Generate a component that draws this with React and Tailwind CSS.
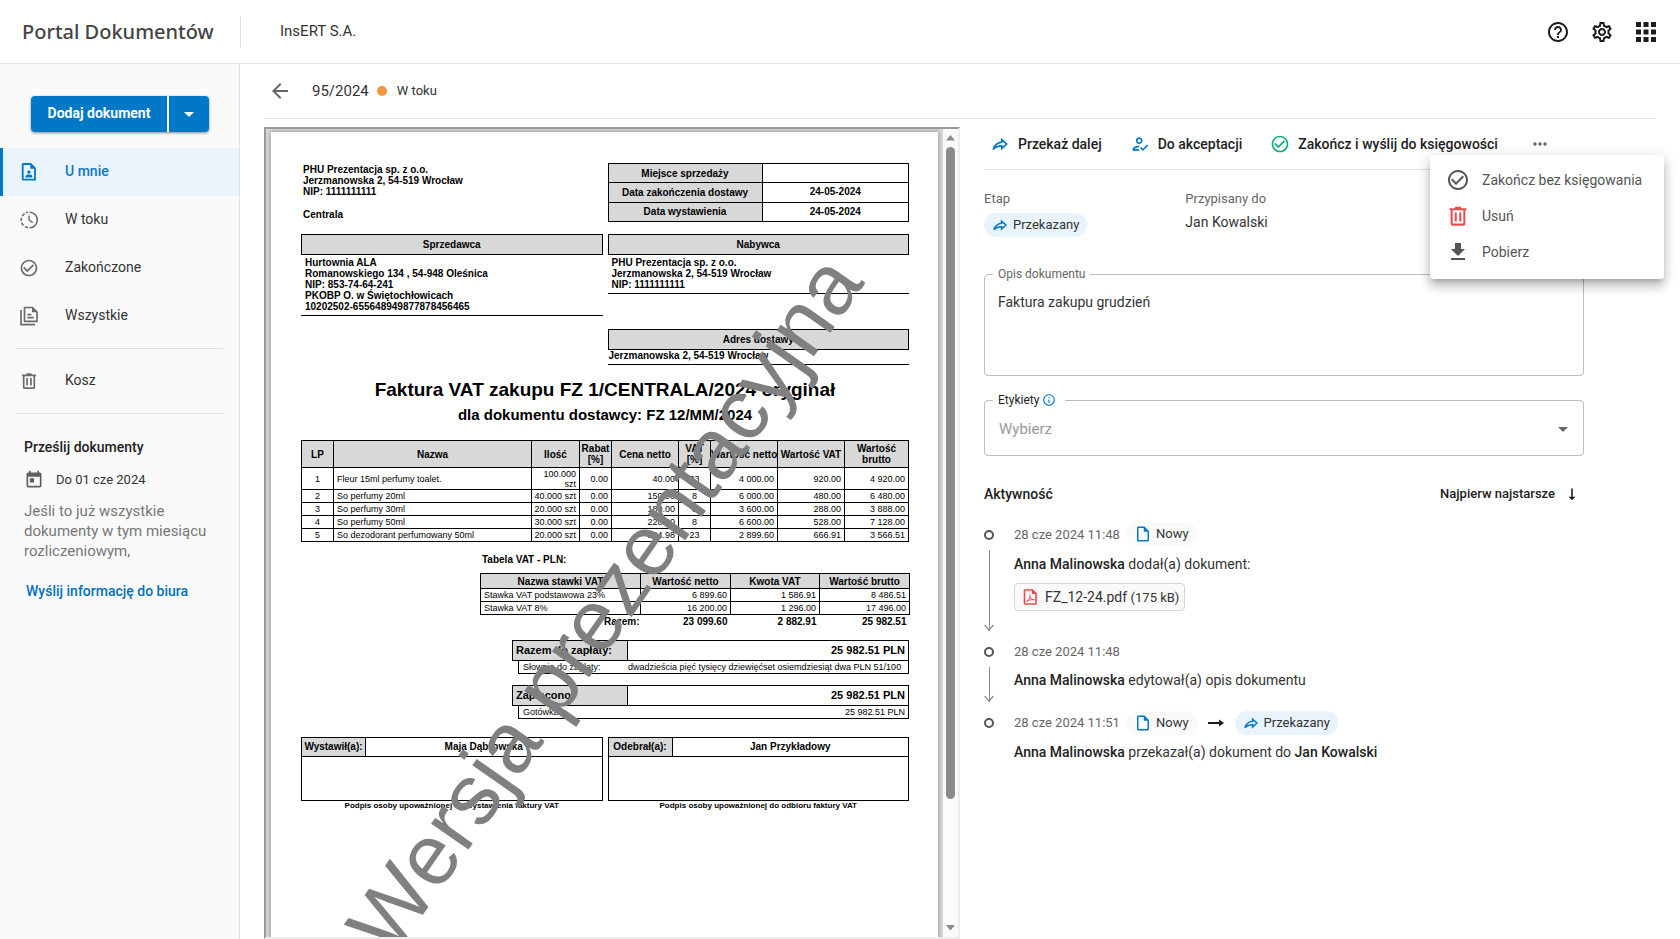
import React from "react";
import {
  MdHelpOutline,
  MdOutlineSettings,
  MdArrowBack,
  MdArrowDropDown,
  MdCheckCircleOutline,
  MdToday,
  MdOutlineHowToReg,
  MdOutlineInfo,
  MdOutlineInsertDriveFile,
  MdMoreHoriz,
  MdDownload,
} from "react-icons/md";

function ShareArrow({ className }) {
  return (
    <svg viewBox="0 0 20 20" className={className} fill="none" stroke="currentColor" strokeWidth="1.9" aria-hidden="true">
      <path d="M12 5.200v2.700C7 8.500 3.800 11.200 2.400 16c2.300-2.600 5.300-3.900 9.600-3.900v3L17.400 10z" />
    </svg>
  );
}

function TrashIcon({ className }) {
  return (
    <svg viewBox="0 0 20 20" className={className} fill="none" stroke="currentColor" strokeWidth="1.700" aria-hidden="true">
      <path d="M3 4.300h14M7.500 3.200h5" />
      <path d="M4.700 4.500v11.700q0 1 1 1h8.600q1 0 1-1V4.500" />
      <path d="M8.100 7v7.600M11.900 7v7.600" />
    </svg>
  );
}

function UserFileIcon({ className }) {
  return (
    <svg viewBox="0 0 20 20" className={className} aria-hidden="true">
      <path d="M4.300 2h7.400L16 6.300v11.400H4.300q-.6 0-.6-.6V2.600q0-.6.600-.6z" fill="none" stroke="currentColor" strokeWidth="1.800" strokeLinejoin="round" />
      <path d="M11.300 1.500v5.300h5.200z" fill="currentColor" />
      <circle cx="9.900" cy="10.100" r="1.700" fill="currentColor" />
      <path d="M6.500 15.500v-1c0-1.300 1.800-1.900 3.400-1.900s3.400.6 3.400 1.900v1z" fill="currentColor" />
    </svg>
  );
}

function ProgressClock({ className }) {
  return (
    <svg viewBox="0 0 20 20" className={className} fill="none" stroke="currentColor" strokeWidth="1.600" aria-hidden="true">
      <path d="M10.500 2.200a7.800 7.800 0 0 1 0 15.600" />
      <path d="M9 17.700a7.800 7.800 0 0 1-6.800-7.700 7.800 7.800 0 0 1 6.800-7.700" strokeDasharray="3.200 1.800" />
      <path d="M10 5.500V10l3.700 2.600" strokeWidth="1.400" />
    </svg>
  );
}

function FilesIcon({ className }) {
  return (
    <svg viewBox="0 0 20 20" className={className} fill="none" stroke="currentColor" strokeWidth="1.700" aria-hidden="true">
      <path d="M5.500 1.500h8L18 6v9.300H5.500z" strokeLinejoin="round" />
      <path d="M13 1.500v4.800h4.800z" fill="currentColor" stroke="none" />
      <path d="M2 4v14.700h14M8.300 8.700h4M8.300 11.700h6.500" />
    </svg>
  );
}

function PdfIcon({ className }) {
  return (
    <svg viewBox="0 0 20 20" className={className} fill="none" stroke="currentColor" strokeWidth="1.600" aria-hidden="true">
      <path d="M4.500 3h8L16 6.500V17H4.500z" strokeLinejoin="round" />
      <path d="M12 2.500v4.500h4.500z" fill="currentColor" stroke="none" />
      <path d="M6.500 14.500c2.500-1.500 4-4 3.500-7M10 9.500c.6 2 2 3.400 4.500 3.300-2.500-.5-5.200 0-8 1.700" strokeWidth="1" />
    </svg>
  );
}

function DownArrowLine() {
  return (
    <div className="relative mx-auto mb-[9px] w-px flex-1 bg-[#8a8a8a]">
      <svg viewBox="0 0 10 7" className="absolute bottom-0 left-1/2 h-[7px] w-[10px] -translate-x-1/2" fill="none" stroke="#8a8a8a" strokeWidth="1.200" aria-hidden="true">
        <path d="M.6 1 5 6.200 9.400 1" />
      </svg>
    </div>
  );
}

function NavItem({ icon, label, active }) {
  return (
    <a
      href="#"
      aria-current={active ? "page" : undefined}
      className={
        active
          ? "flex h-12 items-center gap-[26px] border-l-[3px] border-[#0078c8] bg-[#e9f3fb] pl-4 text-[14px] font-medium text-[#0d78c4]"
          : "flex h-12 items-center gap-[26px] pl-[19px] text-[14px] text-[#333]"
      }
    >
      <span className={active ? "text-[#0078c8]" : "text-[#6b6b6b]"}>{icon}</span>
      <span className="pb-px">{label}</span>
    </a>
  );
}

function StatusChip({ kind, children }) {
  return (
    <span
      className={
        kind === "sent"
          ? "inline-flex h-6 items-center gap-[5px] rounded-full bg-[#e9f3fb] px-2 text-[13px] text-[#333]"
          : "inline-flex h-6 items-center gap-1 rounded-full bg-[#fafafa] px-2 text-[13px] text-[#333]"
      }
    >
      {kind === "sent" ? (
        <ShareArrow className="size-4 text-[#0078c8]" />
      ) : (
        <MdOutlineInsertDriveFile className="size-[18px] text-[#0078c8]" />
      )}
      {children}
    </span>
  );
}

const items = [
  ["1", "Fleur 15ml perfumy toalet.", "100.000 szt", "0.00", "40.00", "23", "4 000.00", "920.00", "4 920.00"],
  ["2", "So perfumy 20ml", "40.000 szt", "0.00", "150.00", "8", "6 000.00", "480.00", "6 480.00"],
  ["3", "So perfumy 30ml", "20.000 szt", "0.00", "180.00", "8", "3 600.00", "288.00", "3 888.00"],
  ["4", "So perfumy 50ml", "30.000 szt", "0.00", "220.00", "8", "6 600.00", "528.00", "7 128.00"],
  ["5", "So dezodorant perfumowany 50ml", "20.000 szt", "0.00", "144.98", "23", "2 899.60", "666.91", "3 566.51"],
];

const vatRows = [
  ["Stawka VAT podstawowa 23%", "6 899.60", "1 586.91", "8 486.51"],
  ["Stawka VAT 8%", "16 200.00", "1 296.00", "17 496.00"],
];

const cell = "border border-black p-0 leading-[10px]";
const headCell = "border border-black bg-[#d8d8d8] p-0 leading-[11px] font-bold";

function PartyBox({ title, lines, flush }) {
  return (
    <div>
      <div className="flex h-[21px] items-center justify-center border border-black bg-[#d8d8d8]">{title}</div>
      <div className={flush ? "border-b border-black pb-[3px] pl-px" : "border-b border-black px-1 pt-0.5 pb-[3px]"}>
        {lines.map((line) => (
          <p key={line}>{line}</p>
        ))}
      </div>
    </div>
  );
}

function Payment({ title, amount, note, noteValue, wide }) {
  return (
    <div className="ml-[211px]">
      <div className="flex h-[21px] items-stretch border border-black text-[11px] leading-[19px]">
        <div className="w-[115px] border-r border-black bg-[#d8d8d8] pl-[3px]">{title}</div>
        <div className="flex-1 pr-[3px] text-right">{amount}</div>
      </div>
      <div className="ml-[6px] flex h-[13px] border-x border-b border-black text-[9px] leading-[12px] font-normal">
        <div className="w-[108px] pl-[4px]">{note}</div>
        <div className={wide ? "flex-1 pl-px" : "flex-1 pr-[3px] text-right"}>{noteValue}</div>
      </div>
    </div>
  );
}

function Signature({ title, person, caption }) {
  return (
    <div>
      <div className="border border-black">
        <div className="flex h-[19px] items-stretch border-b border-black leading-[18px]">
          <div className="w-16 border-r border-black bg-[#d8d8d8] text-center">{title}</div>
          <div className="flex-1 text-center">{person}</div>
        </div>
        <div className="h-[43px]" />
      </div>
      <p className="text-center text-[8px] leading-[10px]">{caption}</p>
    </div>
  );
}

function Invoice() {
  return (
    <article className="relative h-[943px] overflow-hidden bg-white pt-[31px] pr-[29px] pl-[30px] font-['Liberation_Sans',Arial,sans-serif] text-[10px] leading-[11px] font-bold text-black shadow-[0_0_6px_2px_rgba(0,0,0,0.28)]">
      <div className="grid grid-cols-2 gap-[5px]">
        <div className="pt-px pl-0.5">
          <p>PHU Prezentacja sp. z o.o.</p>
          <p>Jerzmanowska 2, 54-519 Wrocław</p>
          <p>NIP: 1111111111</p>
          <p className="pt-3">Centrala</p>
        </div>
        <table className="h-[59px] w-full table-fixed border-collapse text-center">
          <tbody>
            <tr>
              <th className={headCell + " w-[154px]"}>Miejsce sprzedaży</th>
              <td className={cell}></td>
            </tr>
            <tr>
              <th className={headCell}>Data zakończenia dostawy</th>
              <td className={cell}>24-05-2024</td>
            </tr>
            <tr>
              <th className={headCell}>Data wystawienia</th>
              <td className={cell}>24-05-2024</td>
            </tr>
          </tbody>
        </table>
      </div>

      <div className="mt-3 grid grid-cols-2 items-start gap-[5px]">
        <PartyBox
          title="Sprzedawca"
          lines={["Hurtownia ALA", "Romanowskiego 134 , 54-948 Oleśnica", "NIP: 853-74-64-241", "PKOBP O. w Świętochłowicach", "10202502-655648949877878456465"]}
        />
        <div className="flex flex-col gap-[35px]">
          <PartyBox title="Nabywca" lines={["PHU Prezentacja sp. z o.o.", "Jerzmanowska 2, 54-519 Wrocław", "NIP: 1111111111"]} />
          <PartyBox title="Adres dostawy" lines={["Jerzmanowska 2, 54-519 Wrocław"]} flush />
        </div>
      </div>

      <h1 className="mt-[13px] text-center text-[19px] leading-6">Faktura VAT zakupu FZ 1/CENTRALA/2024 oryginał</h1>
      <h2 className="mt-[3px] text-center text-[15px] leading-5">dla dokumentu dostawcy: FZ 12/MM/2024</h2>

      <table className="mt-[15px] w-full table-fixed border-collapse text-[9px] font-normal">
        <thead className="text-[10px]">
          <tr className="h-[27px]">
            <th className={headCell + " w-[32px]"}>LP</th>
            <th className={headCell + " w-[198px]"}>Nazwa</th>
            <th className={headCell + " w-[48px]"}>Ilość</th>
            <th className={headCell + " w-[32px]"}>Rabat [%]</th>
            <th className={headCell + " w-[67px]"}>Cena netto</th>
            <th className={headCell + " w-[32px]"}>VAT [%]</th>
            <th className={headCell + " w-[67px] whitespace-nowrap"}>Wartość netto</th>
            <th className={headCell + " w-[67px] whitespace-nowrap"}>Wartość VAT</th>
            <th className={headCell + " w-[64px]"}>Wartość brutto</th>
          </tr>
        </thead>
        <tbody>
          {items.map((row, r) => (
            <tr key={row[0]} className={r === 0 ? "h-[22px]" : "h-[13px]"}>
              {row.map((value, c) => (
                <td
                  key={c}
                  className={
                    cell + (c === 0 || c === 5 ? " text-center" : c === 1 ? " pl-[3px] text-left" : " pr-[3px] text-right")
                  }
                >
                  {value}
                </td>
              ))}
            </tr>
          ))}
        </tbody>
      </table>

      <p className="mt-3 pl-[181px]">Tabela VAT - PLN:</p>
      <div className="mt-2 pl-[179px]">
        <table className="w-full table-fixed border-collapse text-[9px] font-normal">
          <thead className="text-[10px]">
            <tr className="h-[15px]">
              <th className={headCell + " w-[160px]"}>Nazwa stawki VAT</th>
              <th className={headCell + " w-[90px]"}>Wartość netto</th>
              <th className={headCell + " w-[89px]"}>Kwota VAT</th>
              <th className={headCell + " w-[90px]"}>Wartość brutto</th>
            </tr>
          </thead>
          <tbody>
            {vatRows.map((row) => (
              <tr key={row[0]} className="h-[13px]">
                {row.map((value, c) => (
                  <td key={c} className={cell + (c === 0 ? " pl-[3px] text-left" : " pr-[3px] text-right")}>
                    {value}
                  </td>
                ))}
              </tr>
            ))}
          </tbody>
          <tfoot className="text-right text-[10px] leading-[11px] font-bold">
            <tr className="h-[13px]">
              <td className="p-0 pr-px">Razem:</td>
              <td className="p-0 pr-[3px]">23 099.60</td>
              <td className="p-0 pr-[3px]">2 882.91</td>
              <td className="p-0 pr-[3px]">25 982.51</td>
            </tr>
          </tfoot>
        </table>
      </div>

      <div className="mt-3 flex flex-col gap-[11px]">
        <Payment
          title="Razem do zapłaty:"
          amount="25 982.51 PLN"
          note="Słownie do zapłaty:"
          noteValue="dwadzieścia pięć tysięcy dziewięćset osiemdziesiąt dwa PLN 51/100"
          wide
        />
        <Payment title="Zapłacono:" amount="25 982.51 PLN" note="Gotówka" noteValue="25 982.51 PLN" />
      </div>

      <div className="mt-[18px] grid grid-cols-2 gap-[5px]">
        <Signature title="Wystawił(a):" person="Maja Dąbrowska" caption="Podpis osoby upoważnionej do wystawienia faktury VAT" />
        <Signature title="Odebrał(a):" person="Jan Przykładowy" caption="Podpis osoby upoważnionej do odbioru faktury VAT" />
      </div>

      <div className="absolute top-[754px] left-[121px] origin-[0_73px] rotate-[-55deg] text-[86px] leading-none font-normal whitespace-nowrap text-[#808080]">
        Wersja prezentacyjna
      </div>
    </article>
  );
}

function DocumentPreview() {
  return (
    <section aria-label="Podgląd dokumentu" className="flex min-h-0 min-w-0 flex-1 border-2 border-t-[#999] border-r-[#ededed] border-b-[#ededed] border-l-[#999]">
      <div className="min-w-0 flex-1 overflow-hidden bg-[#e4e4e4] px-[5px] pt-[3px]">
        <Invoice />
      </div>
      <div className="flex w-[15px] shrink-0 flex-col items-center bg-[#fbfbfb]">
        <svg viewBox="0 0 9 18" className="h-[18px] w-[9px]" aria-hidden="true">
          <path d="M0 11.500h9L4.500 6z" fill="#8b8b8b" />
        </svg>
        <div className="w-[9px] flex-[651] rounded-full bg-[#8b8b8b]" />
        <div className="flex-[120]" />
        <svg viewBox="0 0 9 18" className="h-[18px] w-[9px]" aria-hidden="true">
          <path d="M0 6h9l-4.500 5.500z" fill="#8b8b8b" />
        </svg>
      </div>
    </section>
  );
}

function TimelineEntry({ date, chips, children, last }) {
  return (
    <li className="flex gap-5">
      <div className="flex w-[10px] flex-col">
        <span className="mt-[7px] mb-[10px] size-[10px] shrink-0 rounded-full border-2 border-[#555]" />
        {!last && <DownArrowLine />}
      </div>
      <div className="flex-1">
        <div className="flex h-6 items-center text-[13px] text-[#666]">
          <time>{date}</time>
          {chips}
        </div>
        {children}
      </div>
    </li>
  );
}

function ActionMenu() {
  const rows = [
    [<MdCheckCircleOutline className="size-6 text-[#555]" />, "Zakończ bez księgowania"],
    [<TrashIcon className="size-6 text-[#e84c4c]" />, "Usuń"],
    [<MdDownload className="size-6 text-[#555]" />, "Pobierz"],
  ];
  return (
    <div role="menu" className="absolute top-7 -right-2 z-10 w-[234px] rounded bg-white pt-[7px] pb-[9px] shadow-[0_5px_5px_-3px_rgba(0,0,0,0.2),0_8px_10px_1px_rgba(0,0,0,0.14),0_3px_14px_2px_rgba(0,0,0,0.12)]">
      {rows.map(([icon, label]) => (
        <button key={label} role="menuitem" type="button" className="flex h-9 w-full items-center gap-3 pl-4 text-[14px] text-[#555]">
          {icon}
          {label}
        </button>
      ))}
    </div>
  );
}

export default function App() {
  return (
    <div className="flex h-screen flex-col overflow-hidden bg-white font-[Roboto,sans-serif] text-[#333]">
      <header className="flex h-16 shrink-0 items-center border-b border-[#e0e0e0] pr-[22px]">
        <div className="flex h-8 w-[241px] items-center border-r border-[#e0e0e0] pl-[22px] font-['Noto_Sans',sans-serif] text-[20px] font-medium text-[#444]">
          Portal Dokumentów
        </div>
        <div className="flex-1 pl-[39px] text-[15px]">InsERT S.A.</div>
        <div className="flex items-center gap-5 text-[#1d1d1d]">
          <button type="button" aria-label="Pomoc">
            <MdHelpOutline className="size-6" />
          </button>
          <button type="button" aria-label="Ustawienia">
            <MdOutlineSettings className="size-6" />
          </button>
          <button type="button" aria-label="Aplikacje">
            <svg viewBox="0 0 24 24" className="size-6" fill="currentColor" aria-hidden="true">
              <path d="M2 2h5v5H2zM9.500 2h5v5h-5zM17 2h5v5h-5zM2 9.500h5v5H2zM9.500 9.500h5v5h-5zM17 9.500h5v5h-5zM2 17h5v5H2zM9.500 17h5v5h-5zM17 17h5v5h-5z" />
            </svg>
          </button>
        </div>
      </header>

      <div className="flex min-h-0 flex-1">
        <aside className="flex w-60 shrink-0 flex-col border-r border-[#e0e0e0] bg-[#fafafa]">
          <div className="mt-8 mb-4 ml-[31px] flex h-9 w-[178px] gap-0.5 self-start rounded shadow-[0_1px_3px_rgba(0,0,0,0.45)]">
            <button type="button" className="flex-1 rounded-l bg-[#0078c8] pb-0.5 text-[14px] font-bold text-white">
              Dodaj dokument
            </button>
            <button type="button" aria-label="Więcej opcji" className="flex w-10 items-center justify-center rounded-r bg-[#0078c8] text-white">
              <MdArrowDropDown className="size-6" />
            </button>
          </div>
          <nav>
            <NavItem active icon={<UserFileIcon className="size-5" />} label="U mnie" />
            <NavItem icon={<ProgressClock className="size-5" />} label="W toku" />
            <NavItem icon={<MdCheckCircleOutline className="size-5" />} label="Zakończone" />
            <NavItem icon={<FilesIcon className="size-5" />} label="Wszystkie" />
            <hr className="mx-4 mt-2 mb-2 border-[#e0e0e0]" />
            <NavItem icon={<TrashIcon className="size-5" />} label="Kosz" />
            <hr className="mx-4 mt-2 border-[#e0e0e0]" />
          </nav>
          <div className="px-6 pt-[23px]">
            <h2 className="text-[14px] leading-5 font-medium text-[#222]">Prześlij dokumenty</h2>
            <div className="mt-[13px] flex items-center gap-3 text-[13px] leading-5">
              <MdToday className="size-5 text-[#5f5f5f]" />
              Do 01 cze 2024
            </div>
            <p className="mt-[11px] text-[15px] leading-5 text-[#777]">Jeśli to już wszystkie dokumenty w tym miesiącu rozliczeniowym,</p>
            <a href="#" className="mt-5 block pl-0.5 text-[14px] leading-5 font-medium text-[#0070bd]">
              Wyślij informację do biura
            </a>
          </div>
        </aside>

        <main className="flex min-w-0 flex-1 flex-col px-6">
          <div className="flex h-[55px] shrink-0 items-center border-b border-[#e0e0e0]">
            <button type="button" aria-label="Wstecz" className="ml-1 text-[#666]">
              <MdArrowBack className="size-6" />
            </button>
            <span className="ml-5 text-[15px]">95/2024</span>
            <span className="mr-[10px] ml-2 size-[10px] rounded-full bg-[#f29646]" />
            <span className="text-[13px]">W toku</span>
          </div>

          <div className="flex min-h-0 flex-1 gap-6 pt-2">
            <DocumentPreview />

            <section aria-label="Szczegóły dokumentu" className="relative w-[672px] shrink-0">
              <ActionMenu />
              <div className="flex h-[43px] items-center border-b border-[#e0e0e0] pb-2 pl-[7px] text-[14px] font-medium text-[#222]">
                <button type="button" className="flex items-center gap-[9px]">
                  <ShareArrow className="size-[18px] text-[#0078c8]" />
                  Przekaż dalej
                </button>
                <button type="button" className="ml-7 flex items-center gap-2">
                  <MdOutlineHowToReg className="size-5 text-[#0078c8]" />
                  Do akceptacji
                </button>
                <button type="button" className="ml-7 flex items-center gap-2">
                  <MdCheckCircleOutline className="size-5 text-[#0fae74]" />
                  Zakończ i wyślij do księgowości
                </button>
                <button type="button" aria-label="Więcej" className="ml-8 text-[#666]">
                  <MdMoreHoriz className="size-5" />
                </button>
              </div>

              <div className="max-w-[600px]">
                <dl className="flex gap-[98px] pt-[19px]">
                  <div>
                    <dt className="text-[13px] leading-5 text-[#666]">Etap</dt>
                    <dd className="mt-1 flex">
                      <StatusChip kind="sent">Przekazany</StatusChip>
                    </dd>
                  </div>
                  <div>
                    <dt className="text-[13px] leading-5 text-[#666]">Przypisany do</dt>
                    <dd className="mt-[3px] text-[14px] leading-5">Jan Kowalski</dd>
                  </div>
                </dl>

                <fieldset className="mt-[29px] h-[110px] rounded border border-[#bdbdbd] px-2">
                  <legend className="px-[5px] text-[12px] leading-4 text-[#666]">
                    <label htmlFor="opis">Opis dokumentu</label>
                  </legend>
                  <textarea id="opis" defaultValue="Faktura zakupu grudzień" className="block h-[76px] w-full resize-none px-[5px] pt-[10px] text-[14px] leading-5 outline-none" />
                </fieldset>

                <fieldset className="mt-4 h-16 rounded border border-[#bdbdbd] px-2">
                  <legend className="flex items-center gap-[3px] pr-[9px] pl-[5px] text-[12px] leading-4 text-[#222]">
                    <label htmlFor="etykiety">Etykiety</label>
                    <MdOutlineInfo className="size-[14px] text-[#0078c8]" />
                  </legend>
                  <div className="flex h-[42px] items-center">
                    <select id="etykiety" className="h-10 flex-1 appearance-none px-[6px] text-[15px] text-[#999] outline-none">
                      <option>Wybierz</option>
                    </select>
                    <MdArrowDropDown className="size-6 shrink-0 text-[#666]" />
                  </div>
                </fieldset>

                <div className="mt-7 flex items-center justify-between text-[14px] leading-5 font-medium text-[#222]">
                  <h2>Aktywność</h2>
                  <button type="button" className="flex items-center gap-[9px] pr-1 text-[13px]">
                    Najpierw najstarsze
                    <svg viewBox="0 0 16 16" className="size-4" aria-hidden="true">
                      <path d="M7.200 2.500h1.600v8.200h2.700L8 14.200l-3.500-3.500h2.700z" fill="currentColor" />
                    </svg>
                  </button>
                </div>

                <ol className="mt-[19px]">
                  <TimelineEntry date="28 cze 2024 11:48" chips={<span className="ml-[6px]"><StatusChip>Nowy</StatusChip></span>}>
                    <p className="mt-[7px] text-[14px] leading-5">
                      <b className="font-medium text-[#222]">Anna Malinowska</b> dodał(a) dokument:
                    </p>
                    <a href="#" className="mt-[9px] mb-[29px] inline-flex h-7 items-center gap-[5px] rounded border border-[#d5d5d5] bg-[#fafafa] px-[5px] text-[14px]">
                      <PdfIcon className="size-5 text-[#e84c4c]" />
                      <span>
                        FZ_12-24.pdf <span className="text-[13px]">(175 kB)</span>
                      </span>
                    </a>
                  </TimelineEntry>
                  <TimelineEntry date="28 cze 2024 11:48">
                    <p className="mt-[6px] mb-[21px] text-[14px] leading-5">
                      <b className="font-medium text-[#222]">Anna Malinowska</b> edytował(a) opis dokumentu
                    </p>
                  </TimelineEntry>
                  <TimelineEntry
                    last
                    date="28 cze 2024 11:51"
                    chips={
                      <span className="ml-[6px] flex items-center gap-[11px]">
                        <StatusChip>Nowy</StatusChip>
                        <svg viewBox="0 0 16 8" className="h-2 w-4" aria-hidden="true">
                          <path d="M0 3h11V.5L16 4l-5 3.500V5H0z" fill="#1d1d1d" />
                        </svg>
                        <StatusChip kind="sent">Przekazany</StatusChip>
                      </span>
                    }
                  >
                    <p className="mt-[7px] text-[14px] leading-5">
                      <b className="font-medium text-[#222]">Anna Malinowska</b> przekazał(a) dokument do{" "}
                      <b className="font-medium text-[#222]">Jan Kowalski</b>
                    </p>
                  </TimelineEntry>
                </ol>
              </div>
            </section>
          </div>
        </main>
      </div>
    </div>
  );
}
